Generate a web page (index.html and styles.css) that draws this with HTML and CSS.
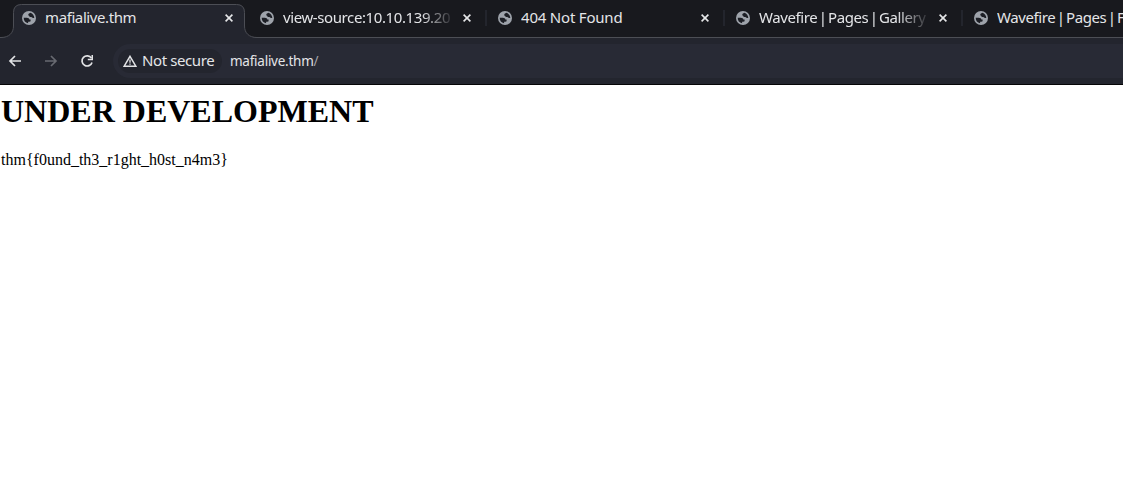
FILE: index.html
```html
<!DOCTYPE html>
<html lang="en">
<head>
<meta charset="utf-8">
<title>mafialive.thm</title>
<link rel="stylesheet" href="styles.css">
</head>
<body>
<svg class="symbols" aria-hidden="true">
  <symbol id="globe" viewBox="0 0 14 14">
    <circle cx="7" cy="7" r="7" fill="#9ea3ab"/>
    <path d="M8.4 1.7C7.2 2.2 6.4 2.8 6.2 3.7C6 4.6 7.2 4.5 7.4 5.2C7.6 6 8.3 6.2 9.2 6.1C10 6 10.2 6.9 11 7.1L12.3 7C12.2 4.6 10.7 2.4 8.4 1.7Z" fill="#1c1e25"/>
    <path d="M1.7 6.7H4.8C6.3 6.7 7.3 7.4 7.3 8.6H8.6V9.8C8.6 10.4 8.1 10.7 7.4 10.7H6.1V12.2C3.4 11.8 1.6 9.5 1.7 6.7Z" fill="#1c1e25"/>
  </symbol>
  <symbol id="close" viewBox="0 0 10 10">
    <path d="M1.6 1.6L8.4 8.4M8.4 1.6L1.6 8.4" fill="none" stroke="#e6e7e9" stroke-width="1.6"/>
  </symbol>
</svg>
<header class="browser">
  <div class="tabs">
    <svg class="active-shape" width="260" height="38" viewBox="0 0 260 38">
      <path d="M0 37.5H1C9 37.5 13.5 33 13.5 26V12.5Q13.5 4.5 21.5 4.5H236.5Q244.5 4.5 244.5 12.5V26C244.5 33 249 37.5 257 37.5H260V38H0Z" fill="#23252e"/>
      <path d="M0 37.5H1C9 37.5 13.5 33 13.5 26V12.5Q13.5 4.5 21.5 4.5H236.5Q244.5 4.5 244.5 12.5V26C244.5 33 249 37.5 257 37.5H260" fill="none" stroke="#4c4e55"/>
    </svg>
    <div class="tab active"><svg class="globe"><use href="#globe"/></svg><span class="title">mafialive.thm</span><svg class="close"><use href="#close"/></svg></div>
    <div class="tab"><svg class="globe"><use href="#globe"/></svg><span class="title fade">view-source:10.10.139.20</span><svg class="close"><use href="#close"/></svg></div>
    <div class="tab divided"><svg class="globe"><use href="#globe"/></svg><span class="title spaced">404 Not Found</span><svg class="close"><use href="#close"/></svg></div>
    <div class="tab divided"><svg class="globe"><use href="#globe"/></svg><span class="title fade tight">Wavefire | Pages | Gallery</span><svg class="close"><use href="#close"/></svg></div>
    <div class="tab divided"><svg class="globe"><use href="#globe"/></svg><span class="title tight">Wavefire | Pages | F</span></div>
  </div>
  <div class="toolbar">
    <div class="nav">
      <svg width="14" height="14" viewBox="0 0 14 14"><path d="M13 7H2M7 2L2 7L7 12" fill="none" stroke="#e2e3e5" stroke-width="1.7"/></svg>
      <svg width="14" height="14" viewBox="0 0 14 14"><path d="M1 7H12M7 2L12 7L7 12" fill="none" stroke="#686a71" stroke-width="1.7"/></svg>
      <svg width="14" height="14" viewBox="0 0 14 14"><path d="M11.4 4.1A5.1 5.1 0 1 0 12 8.4" fill="none" stroke="#e2e3e5" stroke-width="1.7"/><path d="M13 .9V6.2H7.8V4.7H11.5V.9Z" fill="#e2e3e5"/></svg>
    </div>
    <div class="omnibox">
      <div class="security">
        <svg width="14" height="12" viewBox="0 0 14 12"><path d="M7 1.3L12.8 11.2H1.2Z" fill="none" stroke="#e2e3e5" stroke-width="1.5"/><path d="M7 4.6V7.8M7 8.5V9.8" stroke="#e2e3e5" stroke-width="1.3"/></svg>
        <span>Not secure</span>
      </div>
      <span class="url">mafialive.thm<i>/</i></span>
    </div>
  </div>
</header>
<main class="page">
  <h1>UNDER DEVELOPMENT</h1>
  <p>thm{f0und_th3_r1ght_h0st_n4m3}</p>
</main>
</body>
</html>
```
FILE: styles.css
```css
* { box-sizing: border-box; }
body { margin: 0; background: #fff; overflow: hidden; }
.symbols { display: none; }
.browser { width: 1123px; height: 85px; border-bottom: 1px solid #050507; background: #23252e; color: #e4e5e8; font-family: "Noto Sans", sans-serif; overflow: hidden; }
.tabs { position: relative; display: flex; height: 38px; padding-left: 10px; background: #18191e; border-bottom: 1px solid #4c4e55; }
.active-shape { position: absolute; left: 0; top: 0; }
.tab { position: relative; flex: 0 0 238px; display: flex; align-items: center; height: 36px; padding-left: 12px; }
.divided::before { content: ""; position: absolute; left: -1px; top: 10px; width: 2px; height: 16px; background: #23252d; }
.globe { flex: none; width: 14px; height: 14px; margin-right: 9px; }
.title { flex: none; width: 169px; margin-bottom: 2px; overflow: hidden; white-space: nowrap; font-size: 15px; line-height: 20px; letter-spacing: -0.4px; }
.title.spaced { letter-spacing: -0.2px; }
.title.tight { word-spacing: -2.1px; }
.fade { -webkit-mask-image: linear-gradient(to right, #000 138px, transparent 172px); mask-image: linear-gradient(to right, #000 138px, transparent 172px); }
.close { flex: none; width: 10px; height: 10px; margin-left: 10px; }
.toolbar { display: flex; height: 46px; padding-top: 6px; }
.nav { display: flex; align-items: center; width: 113px; height: 34px; padding-left: 8px; gap: 22px; }
.omnibox { flex: 1; display: flex; align-items: center; height: 34px; padding-left: 5px; background: #282a35; border-radius: 17px 0 0 17px; }
.security { display: flex; align-items: center; width: 104px; height: 24px; padding-left: 5px; gap: 5px; border-radius: 12px; background: #23252e; font-size: 15px; line-height: 20px; letter-spacing: -0.4px; white-space: nowrap; }
.security svg { flex: none; }
.security span { margin-bottom: 2px; }
.url { margin-left: 8px; font-size: 13.5px; line-height: 20px; letter-spacing: -0.25px; }
.url i { font-style: normal; color: #a2a4ab; }
.page { padding: 8px 1px; font-family: "Liberation Serif", serif; color: #000; }
.page h1 { margin: 0 0 21px; font-size: 32px; line-height: 37px; }
.page p { margin: 0; font-size: 16px; line-height: 18px; }
```
